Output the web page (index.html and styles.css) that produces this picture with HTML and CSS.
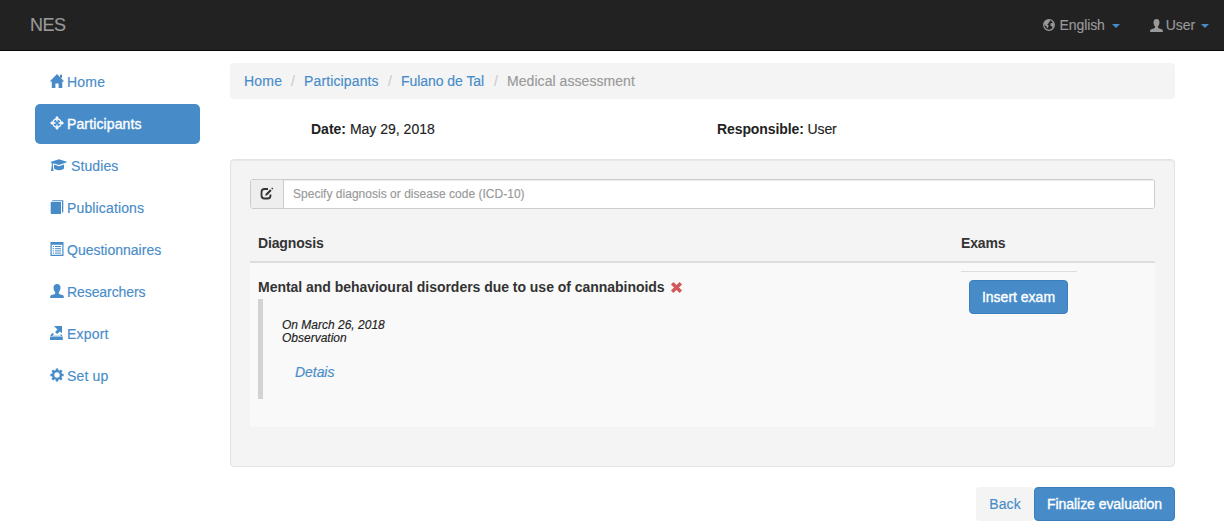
FILE: index.html
```html
<!DOCTYPE html>
<html lang="en">
<head>
<meta charset="utf-8">
<title>NES</title>
<link rel="stylesheet" href="styles.css">
</head>
<body>
<header class="navbar">
  <a class="brand">NES</a>
  <nav class="nav-right">
    <a class="nav-item"><svg class="icon globe" viewBox="0 0 12 12"><circle cx="6" cy="6" r="5.300" fill="none" stroke="currentColor" stroke-width="1.300"/><path d="M1 3.500 3 1.300 6.500.8 7.200 2.200 5.800 3.200 5.600 4.500 4 5.300 5.600 6.300 5.200 8 4.200 9.600 3.500 7.500 1.500 6zM7.600 4.400 9.800 3.400 11 5.800 10.600 7.600 9.400 9 8.800 7.200 7.400 6.400z" fill="currentColor"/></svg><span class="t-english">English</span><i class="caret"></i></a>
    <a class="nav-item"><svg class="icon user-small" viewBox="0 0 14 14"><path d="M3.800 3.700C3.800 1.300 5 .1 7 .1s3.200 1.200 3.200 3.600c0 1.800-.7 3.400-1.600 4.300v1c0 .5.300.8.800 1l3.100 1.100c1 .4 1.400 1 1.400 2.800H.1c0-1.800.4-2.400 1.400-2.800L4.600 10c.5-.2.8-.5.8-1V8c-.9-.9-1.600-2.500-1.600-4.300z" fill="currentColor"/></svg><span class="t-user">User</span><i class="caret"></i></a>
  </nav>
</header>
<div class="page">
  <aside class="sidebar">
    <a class="side-item"><svg class="icon" viewBox="0 0 14 14"><path d="M7 .1 14.300 7.600h-2V14H8.600V9.500H5.400V14H1.800V7.600H-.3z" fill="currentColor"/><path d="M10 .8h2v3h-2z" fill="currentColor"/></svg><span class="t-home">Home</span></a>
    <a class="side-item active"><svg class="icon" viewBox="0 0 14 14"><g fill="none" stroke="currentColor"><circle cx="7" cy="7" r="4.200" stroke-width="1.200"/><path d="M7 1v4.500M7 8.500V13M1 7h4.500M8.500 7H13" stroke-width="1.300"/></g><path d="M7 0 9 2.300H5zM7 14 5 11.700h4zM0 7l2.300-2v4zM14 7l-2.300 2V5z" fill="currentColor"/></svg><span class="t-participants">Participants</span></a>
    <a class="side-item"><svg class="icon wide" viewBox="0 0 18 14"><path d="M.2 3.900 9 1.200l8.500 2.700L9 7 4.200 5.400 2.800 5.700v2L3.500 13H1l.7-5.300V4.700z" fill="currentColor"/><path d="M4 6.600 9 8.300 14 6.600v4C12 12.600 6.400 12.700 4 10.600z" fill="currentColor"/></svg><span class="t-studies">Studies</span></a>
    <a class="side-item"><svg class="icon" viewBox="0 0 14 14"><path d="M.7 2H11V14H1.300L.7 13.300zM2.600.3h10.700v11.400L12 13V1.300H1.600z" fill="currentColor"/></svg><span class="t-publications">Publications</span></a>
    <a class="side-item"><svg class="icon" viewBox="0 0 14 14"><path d="M.5 0h13v14H.5zM1.700 2.700v10h10.600v-10z" fill="currentColor" fill-rule="evenodd"/><path d="M2.800 4.500h1.200M5 4.500h6M2.800 6.700h1.200M5 6.700h6M2.800 8.900h1.200M5 8.900h6M2.800 11.100h1.200M5 11.100h6" stroke="currentColor" fill="none"/></svg><span class="t-questionnaires">Questionnaires</span></a>
    <a class="side-item"><svg class="icon" viewBox="0 0 14 14"><path d="M3.500 3.700C3.500 1.300 5 .1 7 .1s3.500 1.200 3.500 3.600c0 1.800-.8 3.400-1.700 4.300v1.200c0 .5.300.8.800 1l2.900.9c1 .4 1.400 1 1.400 2.900H.1c0-1.900.4-2.500 1.400-2.900l2.900-.9c.5-.2.8-.5.8-1V8c-.9-.9-1.700-2.500-1.700-4.300z" fill="currentColor"/></svg><span class="t-researchers">Researchers</span></a>
    <a class="side-item"><svg class="icon" viewBox="0 0 14 14"><path d="M0 11h12.800v3H0zM1.800 7.300h1.700v1.500L2.300 9.700h8.800L10 8.500h1.500l1.300 1.900H0zM4 .1h8v7.200L9.800 5.500 7.300 8 5 5.900 7.500 3.400z" fill="currentColor"/></svg><span class="t-export">Export</span></a>
    <a class="side-item"><svg class="icon" viewBox="0 0 14 14"><circle cx="7" cy="7" r="3.900" fill="none" stroke="currentColor" stroke-width="2.400"/><path d="M7 .4v3M7 10.600v3M.4 7h3M10.600 7h3M2.300 2.300l2 2M9.700 9.700l2 2M11.700 2.300l-2 2M4.300 9.700l-2 2" stroke="currentColor" stroke-width="2.500"/></svg><span class="t-setup">Set up</span></a>
  </aside>
  <main class="content">
    <nav class="breadcrumb"><a class="b-home">Home</a><i>/</i><a class="b-part">Participants</a><i>/</i><a class="b-name">Fulano de Tal</a><i>/</i><span class="b-med">Medical assessment</span></nav>
    <div class="meta"><div class="t-date"><b>Date:</b> May 29, 2018</div><div class="t-resp"><b>Responsible:</b> User</div></div>
    <section class="well">
      <div class="input-group">
        <span class="addon"><svg class="edit" viewBox="0 0 14 13"><path d="M8 2H4.500Q1.500 2 1.500 5v3.500q0 3 3 3h3q3 0 3-3V7.500" fill="none" stroke="currentColor" stroke-width="1.800"/><path d="m5.200 8.800.5-2L10.200 2.300l1.400 1.400L7.200 8.200zM11.200 1.300l.9-.9 1.300 1.300-.9.9z" fill="currentColor"/></svg></span>
        <input class="field" type="text" placeholder="Specify diagnosis or disease code (ICD-10)">
      </div>
      <div class="row head"><b class="t-diagnosis">Diagnosis</b><b class="t-exams">Exams</b></div>
      <div class="row body">
        <div class="diagnosis">
          <div class="title"><b class="t-disease">Mental and behavioural disorders due to use of cannabinoids</b><svg class="remove" viewBox="0 0 12 12"><path d="m2 2 8 8M10 2 2 10" stroke="currentColor" stroke-width="3.200"/></svg></div>
          <blockquote class="note"><div class="t-on">On March 26, 2018</div><div class="t-observation">Observation</div><a class="details t-details">Detais</a></blockquote>
        </div>
        <div class="exams"><div class="exam-list"><button class="btn primary insert"><span class="t-insert">Insert exam</span></button></div></div>
      </div>
    </section>
    <div class="actions"><button class="btn back"><span class="t-back">Back</span></button><button class="btn primary finalize"><span class="t-finalize">Finalize evaluation</span></button></div>
  </main>
</div>
</body>
</html>
```
FILE: styles.css
```css
* { box-sizing: border-box; }
body { margin: 0; height: 523px; overflow: hidden; background: #fff; color: #333; font: 14px/20px "Liberation Sans", Arial, sans-serif; -webkit-text-stroke: .15px currentColor; }
a { color: #478cc9; }
i { font-style: normal; }
span, b { white-space: nowrap; }
b { -webkit-text-stroke: 0; }
.navbar { height: 51px; background: #222; border-bottom: 1px solid #080808; display: flex; justify-content: space-between; padding: 15px 15px 0 30px; }
.brand { color: #999; font-size: 18px; letter-spacing: -.55px; }
.nav-right { display: flex; gap: 30px; }
.nav-item { display: flex; align-items: center; height: 20px; color: #999; }
.nav-item .icon { width: 12px; height: 12px; margin-right: 4px; }
.nav-item .user-small { width: 13px; height: 13px; margin-right: 3px; }
.t-user { letter-spacing: -.1px; }
.t-english { letter-spacing: -.08px; }
.caret { margin: 2px 0 0 6px; border-top: 4px solid #478cc9; border-left: 4px solid transparent; border-right: 4px solid transparent; }
.nav-item:first-child .caret { margin-left: 7px; }
.page { display: flex; padding: 11px 0 0 35px; }
.sidebar { width: 165px; display: flex; flex-direction: column; gap: 2px; margin-right: 30px; }
.side-item { height: 40px; padding: 10px 15px; border-radius: 5px; display: flex; align-items: flex-start; }
.side-item.active { background: #478cc9; color: #fff; -webkit-text-stroke: .35px #fff; }
.t-home { letter-spacing: .2px; }
.t-participants { letter-spacing: .12px; }
.t-publications { letter-spacing: .14px; }
.t-studies { letter-spacing: .1px; }
.t-researchers { letter-spacing: -.08px; }
.t-export { letter-spacing: .2px; }
.t-setup { letter-spacing: .15px; }
.icon { display: block; flex: none; overflow: visible; width: 14px; height: 14px; margin-right: 3px; }
.side-item .icon { margin-top: 2px; }
.side-item .icon.wide { width: 18px; }
.content { width: 945px; padding-top: 1px; }
.breadcrumb { height: 36px; padding: 8px 14px; background: #f4f4f4; border-radius: 4px; display: flex; }
.breadcrumb i { width: 22px; text-align: center; color: #ccc; }
.breadcrumb span { color: #999; }
.b-home { width: 38px; letter-spacing: .2px; }
.b-part { width: 75px; letter-spacing: .13px; }
.b-name { width: 84px; letter-spacing: -.05px; }
.b-med { letter-spacing: .06px; }
.meta { display: grid; grid-template-columns: 406px 1fr; padding: 20px 0 20px 81px; color: #222; }
.t-resp { letter-spacing: -.1px; }
.well { height: 308px; border: 1px solid #e3e3e3; border-radius: 4px; background: #f4f4f4; padding: 19px; box-shadow: inset 0 1px 1px rgba(0,0,0,.05); }
.input-group { display: flex; height: 30px; border: 1px solid #ccc; border-radius: 3px; overflow: hidden; background: #fff; margin-bottom: 16px; }
.addon { width: 33px; background: #eee; border-right: 1px solid #ccc; padding: 7px 0 0 9px; }
.edit { display: block; width: 14px; height: 13px; }
.field { flex: 1; border: 0; outline: 0; padding: 0 9px; font: 12px "Liberation Sans", Arial, sans-serif; letter-spacing: .02px; background: #fff; box-shadow: inset 0 1px 1px rgba(0,0,0,.075); }
.field::placeholder { color: #999; opacity: 1; }
.row { display: grid; grid-template-columns: 703px 1fr; padding: 8px; }
.head { height: 38px; border-bottom: 2px solid #ddd; }
.t-diagnosis, .t-exams { letter-spacing: -.14px; }
.t-disease { letter-spacing: -.03px; }
.body { height: 164px; background: #f9f9f9; }
.title { display: flex; align-items: center; height: 20px; margin-top: 6px; }
.remove { width: 13px; height: 13px; margin-left: 5px; color: #d05a5a; }
.note { margin: 2px 0 0; height: 100px; border-left: 5px solid #d3d3d3; padding: 20px 0 0 19px; font-size: 12px; line-height: 13px; font-style: italic; color: #222; }
.details { display: block; margin: 17px 0 0 13px; font-size: 14px; line-height: 20px; letter-spacing: -.05px; }
.exam-list { width: 116px; border-top: 1px solid #ddd; padding: 8px; }
.btn { display: block; height: 34px; border: 1px solid transparent; border-radius: 4px; padding: 0; font: 14px/20px "Liberation Sans", Arial, sans-serif; text-align: center; }
.primary { background: #478cc9; border-color: #397fbd; color: #fff; -webkit-text-stroke: .35px #fff; }
.insert { width: 99px; }
.actions { display: flex; justify-content: flex-end; margin-top: 20px; }
.back { width: 58px; background: #f4f4f4; color: #478cc9; letter-spacing: .1px; }
.finalize { width: 141px; letter-spacing: -.05px; }
```
